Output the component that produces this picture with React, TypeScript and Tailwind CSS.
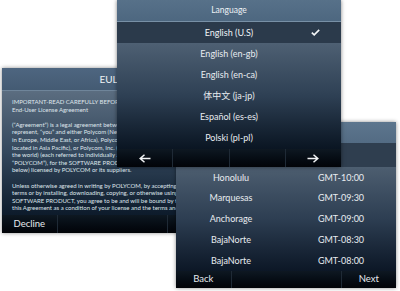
import { ReactNode } from "react"

const font = { fontFamily: "Lato, 'Noto Sans', 'Noto Sans CJK SC', sans-serif" }

const eulaLines = [
  "IMPORTANT-READ CAREFULLY BEFORE USING THIS SOFTWARE PRODUCT:",
  "End-User License Agreement",
  "",
  "(“Agreement”) is a legal agreement between you (and/or any company you",
  "represent, “you” and either Polycom (Netherlands) B.V. (for users located",
  "in Europe, Middle East, or Africa), Polycom Asia Pacific PTE Ltd. (for users",
  "located in Asia Pacific), or Polycom, Inc. (for users in the rest of",
  "the world) (each referred to individually and collectively herein as",
  "“POLYCOM”), for the SOFTWARE PRODUCT (as defined hereinafter",
  "below) licensed by POLYCOM or its suppliers.",
  "",
  "Unless otherwise agreed in writing by POLYCOM, by accepting these",
  "terms or by installing, downloading, copying, or otherwise using the",
  "SOFTWARE PRODUCT, you agree to be and will be bound by the terms of",
  "this Agreement as a condition of your license and the terms and",
]

const languages = [
  "English (en-gb)",
  "English (en-ca)",
  "体中文 (ja-jp)",
  "Español (es-es)",
  "Polski (pl-pl)",
]

const zones = [
  ["Honolulu", "GMT-10:00"],
  ["Marquesas", "GMT-09:30"],
  ["Anchorage", "GMT-09:00"],
  ["BajaNorte", "GMT-08:30"],
  ["BajaNorte", "GMT-08:00"],
]

function Arrow({ dir }: { dir: "left" | "right" }) {
  return (
    <svg width="12" height="9" viewBox="0 0 12 9" className={dir === "right" ? "" : "-scale-x-100"}>
      <path d="M0.5 4.5H10.5M6.5 0.8L10.8 4.5L6.5 8.2" fill="none" stroke="#f2f4f6" strokeWidth="1.5" />
    </svg>
  )
}

function BottomBar({ cells, dividers, height }: { cells: ReactNode[]; dividers: boolean[]; height: string }) {
  return (
    <div className={`flex ${height} bg-gradient-to-b from-[#0e1822] to-[#020408]`}>
      {cells.map((c, i) => (
        <div
          key={i}
          className={`flex flex-1 items-center justify-center text-[9.5px] text-[#e6eaee] ${
            i > 0 && dividers[i - 1] ? "border-l border-[#1f2a36]" : ""
          }`}
        >
          {c}
        </div>
      ))}
    </div>
  )
}

export default function App() {
  return (
    <div className="relative h-[291px] w-[400px] overflow-hidden bg-white" style={font}>
      {/* EULA screen */}
      <div className="absolute left-[2px] top-[68px] flex h-[165px] w-[220px] flex-col shadow-[0_0_4px_rgba(0,0,0,0.45)]">
        <div className="flex h-[23px] items-center justify-center border-b border-[#6f859a] bg-gradient-to-b from-[#4e6680] to-[#445b73] text-[10px] text-[#eef2f5]">
          EULA
        </div>
        <div className="flex-1 overflow-hidden bg-gradient-to-b from-[#5b6d80] via-[#33475c] to-[#0d1b2b] px-[10px] pt-[7px]">
          {eulaLines.map((l, i) => (
            <div key={i} className="h-[7.6px] whitespace-nowrap text-[6px] leading-[7.6px] text-[#dfe5eb]">
              {l}
            </div>
          ))}
        </div>
        <BottomBar height="h-[18px]" cells={["Decline", "", "", "Accept"]} dividers={[true, false, true]} />
      </div>

      {/* Time zone screen */}
      <div className="absolute left-[176px] top-[122px] flex h-[166px] w-[220px] flex-col shadow-[0_0_4px_rgba(0,0,0,0.45)]">
        <div className="h-[21px] bg-gradient-to-b from-[#5d768e] to-[#536b83]" />
        <div className="h-[24px] bg-[#2f3e4f]" />
        <div className="flex-1 bg-gradient-to-b from-[#4d5e70] via-[#2d3e52] to-[#0c1726]">
          {zones.map(([city, gmt], i) => (
            <div key={i} className="grid h-[20.8px] grid-cols-2 items-center text-center text-[9px] text-[#e8ecf0]">
              <span>{city}</span>
              <span>{gmt}</span>
            </div>
          ))}
        </div>
        <BottomBar height="h-[17px]" cells={["Back", "", "", "Next"]} dividers={[true, false, true]} />
      </div>

      {/* Language screen */}
      <div className="absolute left-[117px] top-0 flex h-[167px] w-[224px] flex-col shadow-[0_0_4px_rgba(0,0,0,0.5)]">
        <div className="flex h-[22px] items-center justify-center border-b border-[#7890a6] bg-gradient-to-b from-[#577189] to-[#4d6780] text-[8.5px] text-[#eef2f5]">
          Language
        </div>
        <div className="relative flex h-[21px] items-center justify-center bg-[#2b3a4b] text-[9px] text-[#f0f3f6]">
          English (U.S)
          <svg width="9" height="7" viewBox="0 0 9 7" className="absolute right-[21px] top-[7px]">
            <path d="M0.8 3.6L3.2 5.9L8.2 0.9" fill="none" stroke="#f4f6f8" strokeWidth="1.6" />
          </svg>
        </div>
        <div className="flex-1 bg-gradient-to-b from-[#4e6073] via-[#2e4054] to-[#0a1522]">
          {languages.map((l) => (
            <div key={l} className="flex h-[21px] items-center justify-center text-[9px] text-[#e8ecf0]">
              {l}
            </div>
          ))}
        </div>
        <BottomBar
          height="h-[18px]"
          cells={[<Arrow dir="left" />, "", "", <Arrow dir="right" />]}
          dividers={[true, true, true]}
        />
      </div>
    </div>
  )
}
